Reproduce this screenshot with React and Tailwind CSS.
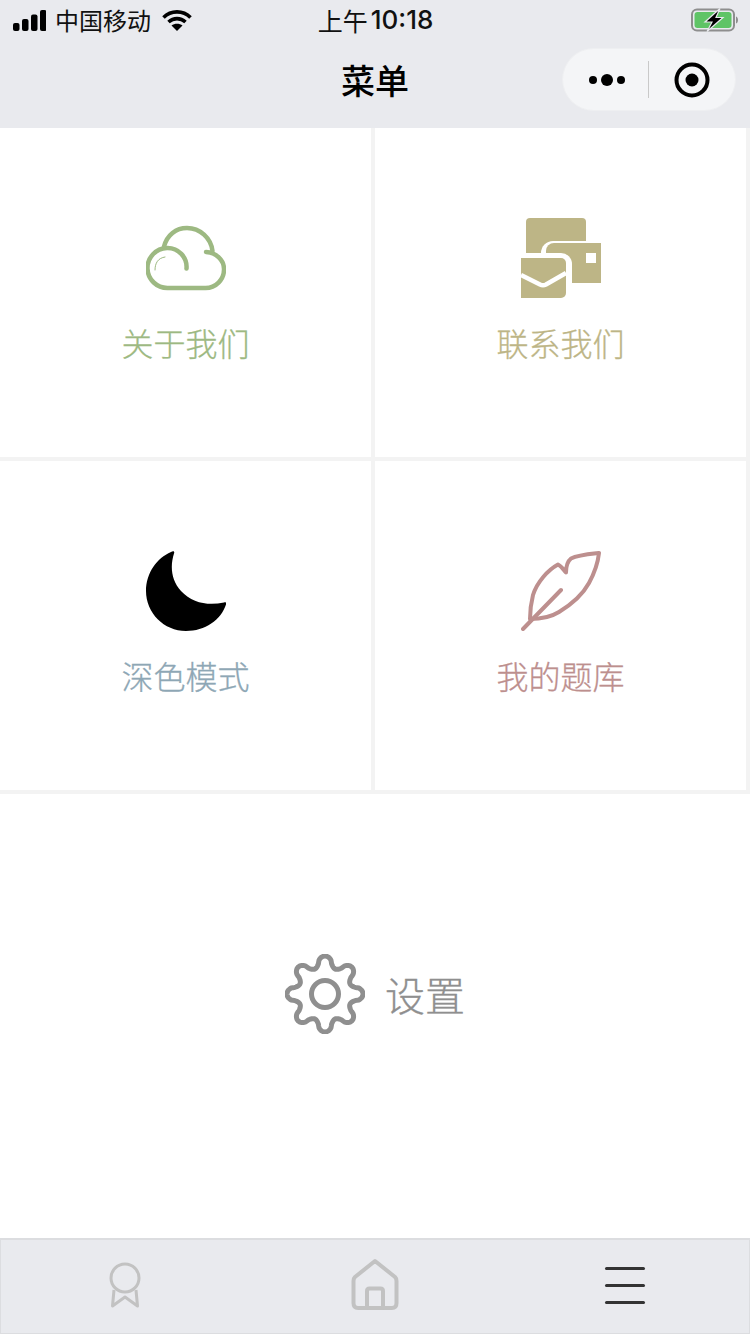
import React from "react";

const FONT = "font-['Noto_Sans_CJK_SC','Noto_Sans',sans-serif]";

// 8 lobed outline for the settings gear
const gearPath = () => {
  const pts = [];
  for (let i = 0; i < 320; i++) {
    const a = (i / 320) * Math.PI * 2;
    const c = Math.cos(8 * a);
    const r = 32.5 + 5.5 * Math.sign(c) * Math.pow(Math.abs(c), 0.65);
    pts.push(`${(325 + r * Math.sin(a)).toFixed(2)} ${(994 - r * Math.cos(a)).toFixed(2)}`);
  }
  return `M${pts.join("L")}Z`;
};

const CloudIcon = () => (
  <svg className="w-20 h-20" viewBox="146 218 80 80" fill="none" stroke="#9db982" strokeWidth="4.500" strokeLinecap="round" strokeLinejoin="round">
    <path d="M186.500 268.500A19 19 0 0 0 167 248A20 20 0 0 0 168 288H205A18.500 18.500 0 0 0 224 269C224 260 216 252.500 206 252" />
    <path d="M164 246.500C167 235 176 228 187 228C200 228 211 238 212.500 251" />
    <path d="M155 270C155 263 158 258 165 257" strokeWidth="1" />
  </svg>
);

const MailIcon = () => (
  <svg className="w-20 h-20" viewBox="521 218 80 80">
    <path d="M530 218H582A4 4 0 0 1 586 222V262H526V222A4 4 0 0 1 530 218Z" fill="#bdb586" />
    <path d="M553 241H603V285H541V253A12 12 0 0 1 553 241Z" fill="#fff" />
    <path d="M554 243H601V283H546V251A8 8 0 0 1 554 243Z" fill="#bdb586" />
    <rect x="586" y="253" width="10" height="10" fill="#fff" />
    <path d="M515 253H561A11 11 0 0 1 572 264V301H515Z" fill="#fff" />
    <path d="M521 258H561A5 5 0 0 1 566 263V293A5 5 0 0 1 561 298H521Z" fill="#bdb586" />
    <path d="M521 275L540 284.500Q543 286 546 284.500L566 273" fill="none" stroke="#fff" strokeWidth="4.500" />
  </svg>
);

const MoonIcon = () => (
  <svg className="w-20 h-20" viewBox="146 551 80 80">
    <path d="M171 552C173 550.500 175 551 174 553.500C170 566 171 580 181 591C192 603 208 606 224 602.500C226 602 226.500 603 226 604.500C221 620 205 631 186 631C164 631 146 613 146 591C146 573 157 558 171 552Z" fill="#000" />
  </svg>
);

const FeatherIcon = () => (
  <svg className="w-20 h-20" viewBox="521 551 80 80" fill="none" stroke="#bd8f8e" strokeWidth="4" strokeLinecap="round" strokeLinejoin="round">
    <path d="M599 553C590 554 578 555 571 558.500C568 561 566 567 566 572.500C563 569 561 566 558 564.500C548 570 537 582 533 595C531 603 530 611 530 619C541 619 551 617 559 612C572 604 583 594 589 583C595 572 598 562 599 553Z" />
    <path d="M523 629L561 590" />
  </svg>
);

const GearIcon = () => (
  <svg className="w-20 h-20" viewBox="285 954 80 80" fill="none" stroke="#8f8f8f" strokeWidth="5">
    <path d={gearPath()} />
    <circle cx="325" cy="994" r="13.500" />
  </svg>
);

const menuItems = [
  { label: "关于我们", icon: <CloudIcon />, color: "text-[#9db982]" },
  { label: "联系我们", icon: <MailIcon />, color: "text-[#bdb586]" },
  { label: "深色模式", icon: <MoonIcon />, color: "text-[#8ea7b5]" },
  { label: "我的题库", icon: <FeatherIcon />, color: "text-[#bd8f8e]" },
];

const StatusBar = () => (
  <div className="h-10 grid grid-cols-[1fr_auto_1fr] items-center pl-[13px] pr-3">
    <div className="flex items-center">
      <svg className="w-[33px] h-[21px]" viewBox="0 0 33 21" fill="#000">
        <rect x="0" y="13" width="6.500" height="8" rx="2" />
        <rect x="9" y="9" width="6.500" height="12" rx="2" />
        <rect x="18" y="4.500" width="6.500" height="16.500" rx="2" />
        <rect x="27" y="0" width="6.500" height="21" rx="2" />
      </svg>
      <span className="ml-[9px] text-[24px] leading-none text-[#111]">中国移动</span>
      <svg className="ml-[11px] w-[30px] h-[21px]" viewBox="0 0 30 21" fill="none" stroke="#000" strokeWidth="3.600">
        <path d="M1.500 7.500C9 0 21 0 28.500 7.500" />
        <path d="M6.500 12C11.500 7.500 18.500 7.500 23.500 12" />
        <path d="M15 21L9.500 15.500C12.500 13 17.500 13 20.500 15.500Z" fill="#000" stroke="none" />
      </svg>
    </div>
    <div className="flex items-center gap-[3px] text-[25px] leading-none text-[#111] whitespace-nowrap">
      <span>上午</span>
      <span className="font-['Inter',sans-serif] font-medium text-[26px]">10:18</span>
    </div>
    <div className="flex justify-end">
      <svg className="w-[47px] h-[24px]" viewBox="0 0 47 24" fill="none">
        <rect x="1" y="1.500" width="42" height="21" rx="5" stroke="#8e8e8e" strokeWidth="2" />
        <rect x="3.500" y="4" width="37" height="16" rx="3" fill="#5fc466" />
        <path d="M45 8.500V15.500C46.500 15 47 13.500 47 12C47 10.500 46.500 9 45 8.500Z" fill="#8e8e8e" />
        <path d="M29 0.500L14 14H21L16 23.500L32 9.500H25Z" fill="#000" stroke="#e9eaee" strokeWidth="1.200" />
      </svg>
    </div>
  </div>
);

const NavBar = () => (
  <div className="relative h-[88px] flex items-center justify-center pb-[8px]">
    <span className="text-[34px] leading-none font-medium text-black">菜单</span>
    <div className="absolute right-[14px] top-[8px] w-[174px] h-[63px] rounded-full bg-[#f4f5f7] border border-[#eeeff1] flex items-center">
      <div className="w-[86px] h-[37px] border-r border-[#c9c9c9] flex items-center justify-end gap-[4px] pr-[23px]">
        <span className="w-2 h-2 rounded-full bg-black" />
        <span className="w-3 h-3 rounded-full bg-black" />
        <span className="w-2 h-2 rounded-full bg-black" />
      </div>
      <div className="flex-1 flex justify-center">
        <svg className="w-[36px] h-[36px]" viewBox="0 0 36 36">
          <circle cx="18" cy="18" r="15.500" fill="none" stroke="#000" strokeWidth="4" />
          <circle cx="18" cy="18" r="6.500" fill="#000" />
        </svg>
      </div>
    </div>
  </div>
);

const TabBar = () => (
  <div className="h-[96px] bg-[#e9eaee] border-t-2 border-x border-b border-[#dcdde0] grid grid-cols-[248px_1fr_248px] pb-[3px]">
    <div className="flex items-center justify-center">
      <svg className="w-[34px] h-[50px]" viewBox="108 1260 34 50" fill="none" stroke="#c2c2c2" strokeWidth="3" strokeLinejoin="round">
        <circle cx="125" cy="1278" r="14" />
        <path d="M114 1290L112.500 1306L125 1297L137.500 1306L136 1290" />
      </svg>
    </div>
    <div className="flex items-center justify-center">
      <svg className="w-[50px] h-[54px]" viewBox="350 1258 50 54" fill="none" stroke="#c2c2c2" strokeWidth="4" strokeLinejoin="round" strokeLinecap="round">
        <path d="M375 1261L395 1277C396 1278 396.500 1279 396.500 1281V1303C396.500 1306 395 1308 392 1308H358C355 1308 353.500 1306 353.500 1303V1281C353.500 1279 354 1278 355 1277Z" />
        <path d="M367 1308V1291C367 1289.500 368 1288.500 369.500 1288.500H380.500C382 1288.500 383 1289.500 383 1291V1308" />
      </svg>
    </div>
    <div className="flex items-center justify-center">
      <div className="w-10 flex flex-col gap-[14px]">
        <div className="h-[3px] rounded-full bg-[#333]" />
        <div className="h-[3px] rounded-full bg-[#333]" />
        <div className="h-[3px] rounded-full bg-[#333]" />
      </div>
    </div>
  </div>
);

export default function App() {
  return (
    <div className={`w-[750px] h-[1334px] flex flex-col bg-white overflow-hidden ${FONT}`}>
      <div className="bg-[#e9eaee]">
        <StatusBar />
        <NavBar />
      </div>

      {/* Menu cards */}
      <div className="grid grid-cols-2 gap-1 pr-1 pb-1 bg-[#f3f3f3]">
        {menuItems.map((item) => (
          <div key={item.label} className="h-[329px] bg-white flex flex-col items-center pt-[90px]">
            {item.icon}
            <span className={`mt-[16px] text-[32px] leading-[56px] font-light [-webkit-text-stroke:0.3px] ${item.color}`}>{item.label}</span>
          </div>
        ))}
      </div>

      {/* Settings */}
      <div className="flex-1 flex items-center justify-center gap-[20px] pb-[44px]">
        <GearIcon />
        <span className="text-[40px] leading-none font-light [-webkit-text-stroke:0.3px] text-[#8f8f8f]">设置</span>
      </div>

      <TabBar />
    </div>
  );
}
